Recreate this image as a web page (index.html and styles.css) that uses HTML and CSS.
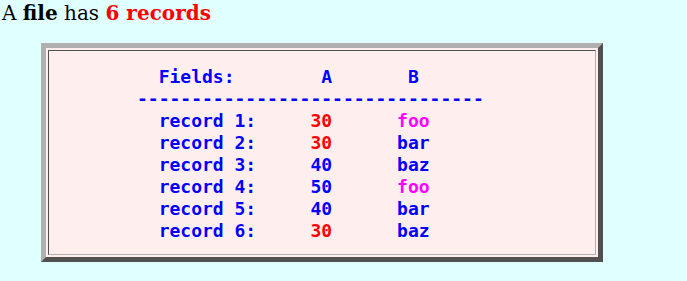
FILE: index.html
```html
<!DOCTYPE html>
<html>
<head>
<meta charset="utf-8">
<link rel="stylesheet" href="styles.css">
</head>
<body>
<p class="intro">A <b>file</b> has <b class="count">6 records</b></p>
<div class="frame">
  <div class="cell">
<pre class="listing">  Fields:        A       B
--------------------------------
  record 1:     <span class="red">30</span>      <span class="mag">foo</span>
  record 2:     <span class="red">30</span>      bar
  record 3:     40      baz
  record 4:     50      <span class="mag">foo</span>
  record 5:     40      bar
  record 6:     <span class="red">30</span>      baz</pre>
  </div>
</div>
</body>
</html>
```
FILE: styles.css
```css
html, body {
  margin: 0;
  background: #e0ffff;
}
body {
  padding: 1px 2px 0;
  font-family: "DejaVu Serif", serif;
  font-size: 20px;
  color: #000;
}
.intro {
  margin: 0;
  line-height: 24px;
}
.count {
  color: #ff0000;
}
.frame {
  box-sizing: border-box;
  width: 562px;
  margin: 18px 0 0 39px;
  border: 5px solid;
  border-color: #b0b0b0 #505050 #505050 #b0b0b0;
  padding: 2px;
  background: #ffeeee;
}
.cell {
  border: 1px solid;
  border-color: #505050 #b0b0b0 #b0b0b0 #505050;
  background: #ffeeee;
  padding: 15px 0 12px 88px;
}
.listing {
  margin: 0;
  font-family: "DejaVu Sans Mono", monospace;
  font-weight: bold;
  font-size: 18px;
  line-height: 22px;
  color: #0000ff;
}
.red {
  color: #ff0000;
}
.mag {
  color: #ff00ff;
}
```
